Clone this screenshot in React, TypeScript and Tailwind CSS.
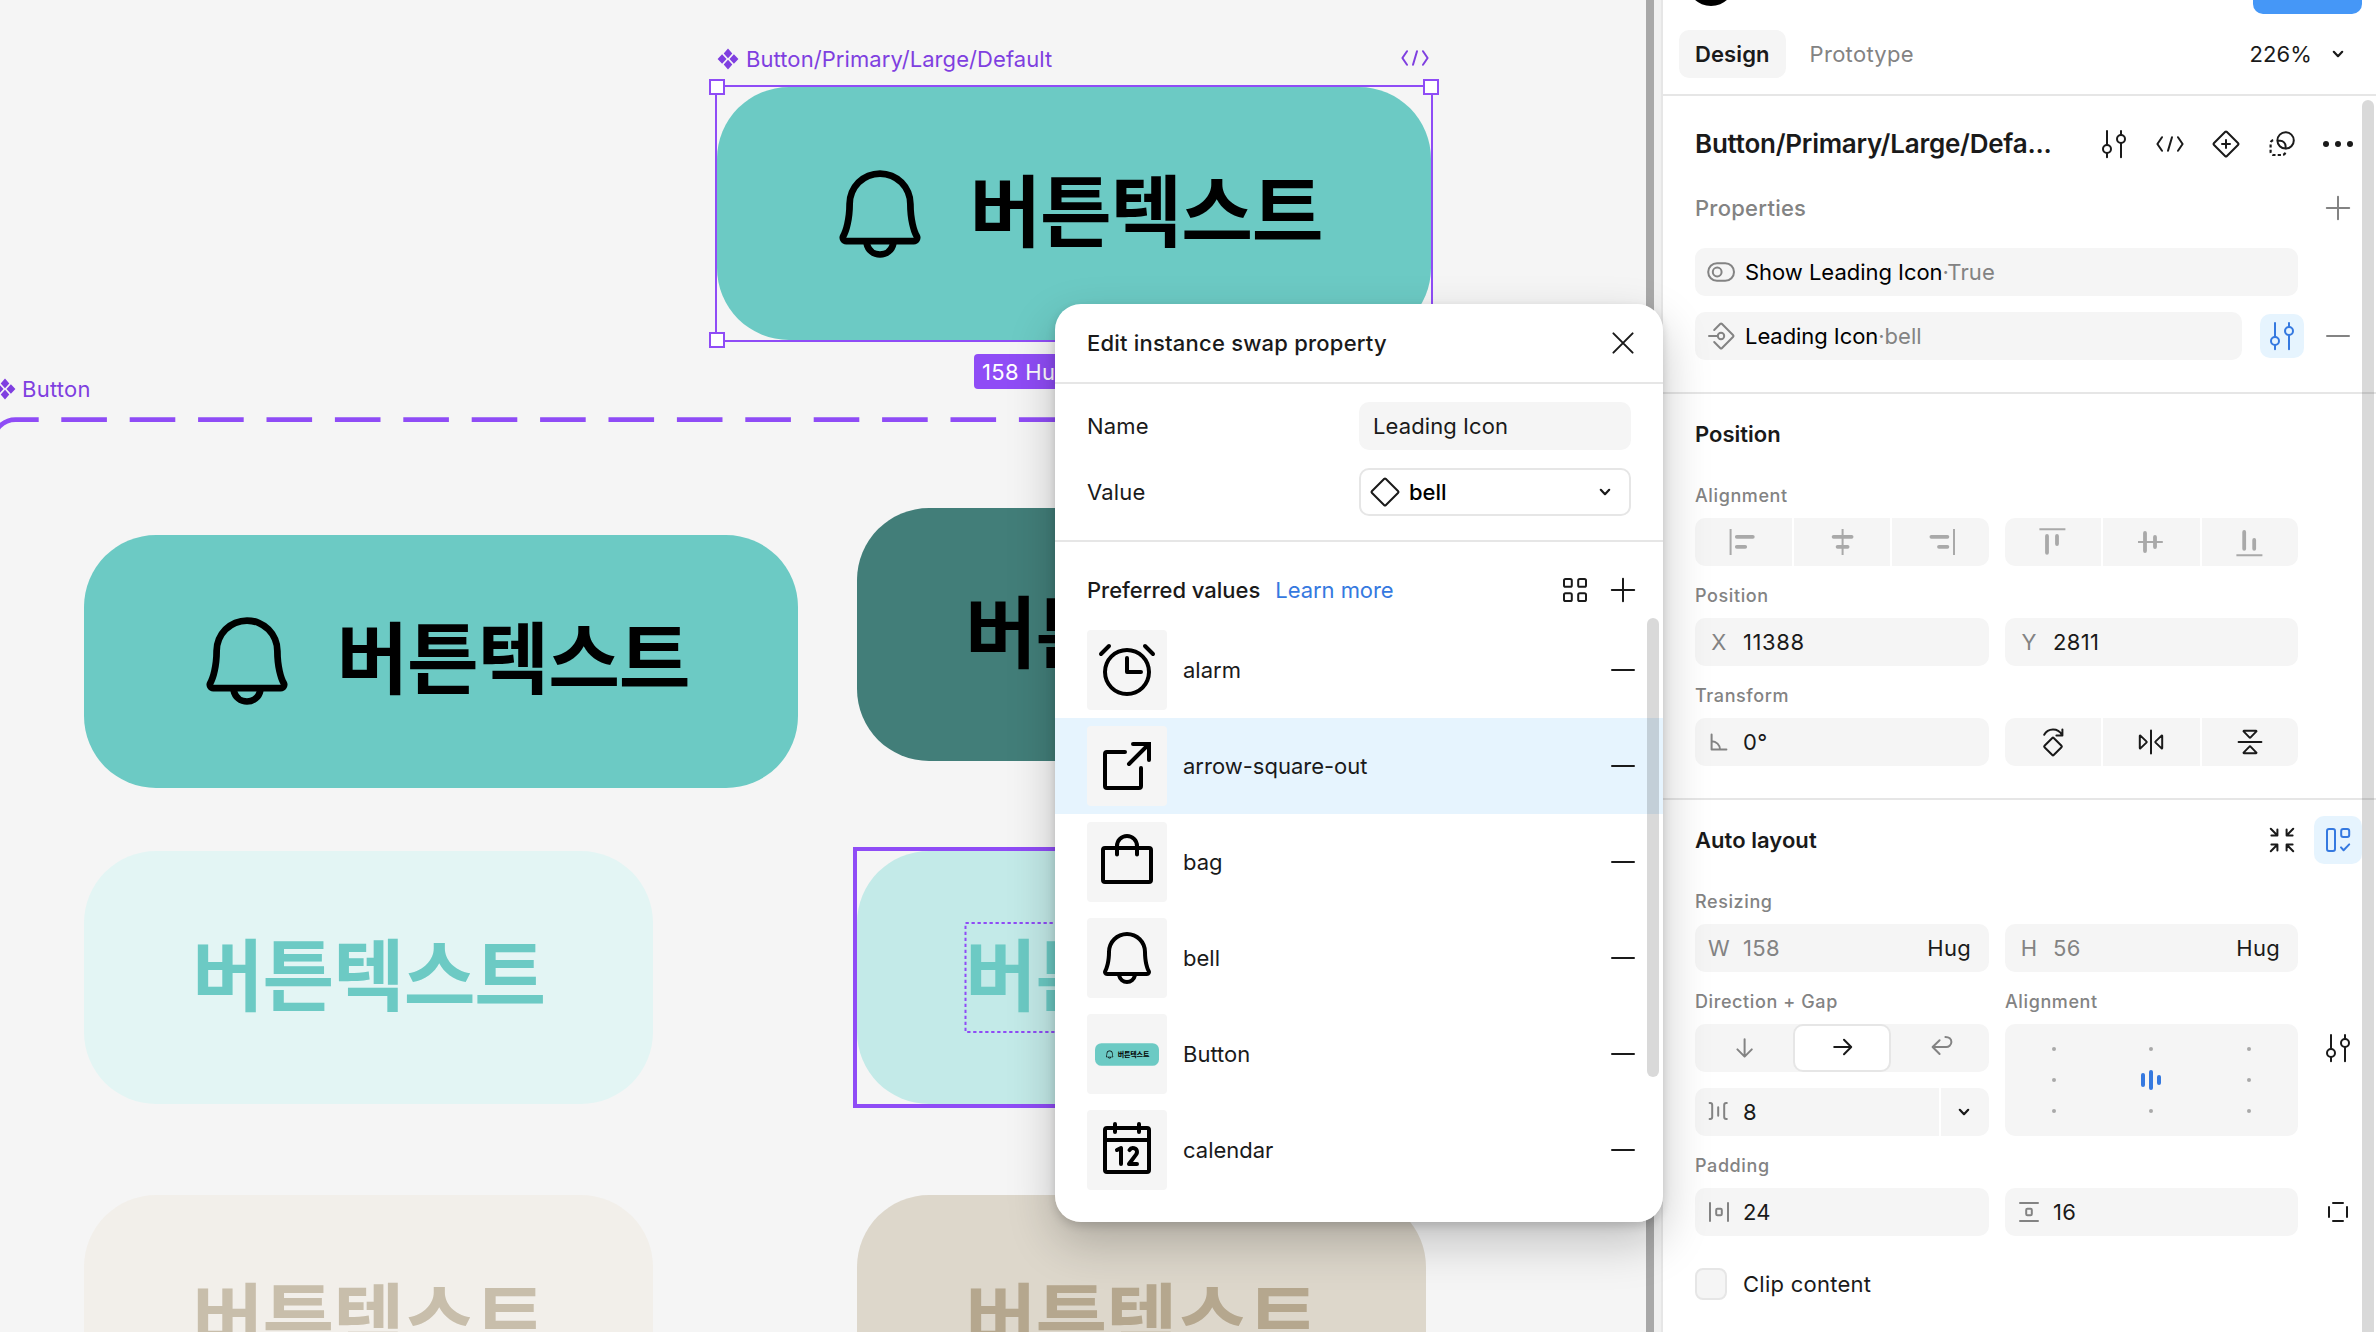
import type { ReactNode } from "react";
import { PiAlarm, PiBell, PiCalendar } from "react-icons/pi";

/* ---------- icons (24-unit grid drawn at 48px) ---------- */

function Ico({ children, className = "text-[#1a1a1a]" }: { children: ReactNode; className?: string }) {
  return (
    <svg
      viewBox="0 0 24 24"
      className={`size-12 shrink-0 ${className}`}
      fill="none"
      stroke="currentColor"
      strokeWidth="1"
      strokeLinecap="round"
      strokeLinejoin="round"
    >
      {children}
    </svg>
  );
}

const GRAY = "text-[#838383]";
const LIGHT = "text-[#a9a9a9]";
const BLUE = "text-[#3579e0]";

const Sliders = ({ className }: { className?: string }) => (
  <Ico className={className}>
    <path d="M8.5 5.5v7M8.5 16.6v2M15.5 5.5v2M15.5 11.6v7" />
    <circle cx="8.5" cy="14.5" r="2" />
    <circle cx="15.5" cy="9.5" r="2" />
  </Ico>
);
const Code = ({ className }: { className?: string }) => (
  <Ico className={className}>
    <path d="M8 8.6 5.7 12 8 15.4M16 8.6l2.3 3.4-2.3 3.4M13 8.6l-2 6.8" />
  </Ico>
);
const Plus = ({ className }: { className?: string }) => (
  <Ico className={className}>
    <path d="M12 6.4v11.2M6.4 12h11.2" />
  </Ico>
);
const Minus = ({ className }: { className?: string }) => (
  <Ico className={className}>
    <path d="M6.5 12h11" />
  </Ico>
);
const Chevron = () => (
  <Ico>
    <path strokeWidth="1.1" d="M9.9 10.9 12 13.1l2.1-2.2" />
  </Ico>
);
const ComponentMark = ({ className = "" }: { className?: string }) => (
  <svg viewBox="0 0 24 24" className={`size-6 shrink-0 ${className}`} fill="currentColor">
    <path d="M12 1.4 16.3 6.4 12 11.2 7.7 6.4zM12 12.8l4.3 4.8L12 22.6l-4.3-5zM6.1 7.2l4.4 4.8-4.4 4.8L1.6 12zM17.9 7.2l4.5 4.8-4.5 4.8-4.4-4.8z" />
  </svg>
);

/* ---------- canvas ---------- */

function DesignButton({ icon = false, className }: { icon?: boolean; className: string }) {
  return (
    <div className={`flex h-[253px] items-center justify-center gap-9 rounded-[72px] ${className}`}>
      {icon && <PiBell className="size-[108px] shrink-0" />}
      <span className="w-[353px] shrink-0 pr-[2px] pb-[14px] text-center font-['Noto_Sans_CJK_KR',sans-serif] text-[78px] leading-[110px] font-bold tracking-[-1.2px] whitespace-nowrap">
        버튼텍스트
      </span>
    </div>
  );
}

const Handle = ({ className }: { className: string }) => (
  <span className={`absolute size-4 border-2 border-[#8f4cf6] bg-white ${className}`} />
);

function Canvas() {
  return (
    <main className="relative w-[1646px] shrink-0 overflow-hidden bg-[#f5f5f5]">
      <DesignButton icon className="absolute top-[534.5px] left-[84px] w-[714px] bg-[#6ccac4] text-black" />
      <DesignButton className="absolute top-[851px] left-[84px] w-[569px] bg-[#e3f5f4] text-[#6ccac4]" />
      <DesignButton className="absolute top-[1195px] left-[84px] w-[569px] bg-[#f2efea] text-[#c8beab]" />
      <DesignButton className="absolute top-[508px] left-[857px] w-[569px] bg-[#427e79] text-black" />
      <DesignButton className="absolute top-[851px] left-[857px] w-[569px] bg-[#c3eae8] text-[#6ccac4]" />
      <DesignButton className="absolute top-[1195px] left-[857px] w-[569px] bg-[#ddd7cb] text-[#b5a78e]" />

      <svg className="absolute inset-0 h-full w-full" fill="none" stroke="#8f4cf6">
        <path d="M-6.5 442a22 22 0 0 1 22-22.4H38.7" strokeWidth="4.6" />
        <path d="M61.3 419.6H1400" strokeWidth="4.6" strokeDasharray="45.6 22.8" />
        <rect x="855" y="849" width="573" height="257" strokeWidth="4" />
        <rect x="965.5" y="923" width="353" height="109" strokeWidth="2" strokeDasharray="3.3 2.7" />
      </svg>

      <div className="absolute top-[376px] left-[-7px] flex h-[26px] items-center gap-[5px] tracking-[0.25px] text-[#7f3fe0]">
        <ComponentMark />
        Button
      </div>

      <div className="absolute top-[46px] left-[716px] flex h-[26px] w-[716px] items-center gap-[6px] tracking-[0.08px] text-[#7f3fe0]">
        <ComponentMark />
        Button/Primary/Large/Default
        <Code className="absolute top-[-12px] right-[-7px] text-[#7f3fe0]" />
      </div>
      <DesignButton icon className="absolute top-[87px] left-[717px] w-[714px] bg-[#6ccac4] text-black" />
      <div className="absolute top-[85px] left-[715px] h-[257px] w-[718px] border-2 border-[#8f4cf6]">
        <Handle className="-top-2 -left-2" />
        <Handle className="-top-2 -right-2" />
        <Handle className="-bottom-2 -left-2" />
        <Handle className="-right-2 -bottom-2" />
      </div>
      <div className="absolute top-[354px] left-[974px] flex h-[35px] items-center rounded-[4px] bg-[#8f4cf6] px-2 tracking-[0.3px] text-white">
        158 Hug × 56 Hug
      </div>
    </main>
  );
}

/* ---------- instance swap dialog ---------- */

const ArrowSquareOut = () => (
  <svg viewBox="0 0 24 24" className="size-16" fill="none" stroke="currentColor" strokeWidth="1.5" strokeLinecap="round">
    <path d="M14.25 3.75h6v6M20.25 3.75l-7.5 7.5" />
    <path strokeLinejoin="round" d="M17.25 12.75v6.75a.75.75 0 0 1-.75.75h-12a.75.75 0 0 1-.75-.75v-12a.75.75 0 0 1 .75-.75h6.75" />
  </svg>
);
const Bag = () => (
  <svg viewBox="0 0 24 24" className="size-16" fill="none" stroke="currentColor" strokeWidth="1.5" strokeLinecap="round">
    <rect x="3" y="6.75" width="18" height="12.75" rx="0.75" />
    <path d="M8.25 9.2V6a3.75 3.75 0 0 1 7.5 0v3.2" />
  </svg>
);
const MiniButton = () => (
  <span className="flex h-[23px] w-16 items-center justify-center">
    <span className="shrink-0 scale-[0.0896]">
      <DesignButton icon className="w-[714px] bg-[#6ccac4] text-black" />
    </span>
  </span>
);

const VALUES: { name: string; thumb: ReactNode; active?: boolean }[] = [
  { name: "alarm", thumb: <PiAlarm className="size-16" /> },
  { name: "arrow-square-out", thumb: <ArrowSquareOut />, active: true },
  { name: "bag", thumb: <Bag /> },
  { name: "bell", thumb: <PiBell className="size-16" /> },
  { name: "Button", thumb: <MiniButton /> },
  { name: "calendar", thumb: <PiCalendar className="size-16" /> },
];

function SwapDialog() {
  return (
    <section className="absolute top-[304px] left-[1055px] flex w-[608px] flex-col overflow-hidden rounded-[26px] bg-white pb-6">
      <header className="flex h-20 items-center justify-between border-b-2 border-[#e6e6e6] pr-4 pl-8">
        <h2 className="font-medium tracking-[0.21px]">Edit instance swap property</h2>
        <Ico>
          <path d="m7.2 7.2 9.6 9.6M16.8 7.2l-9.6 9.6" />
        </Ico>
      </header>

      <div className="flex flex-col gap-[18px] border-b-2 border-[#e6e6e6] px-8 pt-[18px] pb-6">
        <div className="flex items-center justify-between">
          <span className="tracking-[0.2px]">Name</span>
          <div className="flex h-12 w-[272px] items-center rounded-[10px] bg-[#f5f5f5] px-[14px]">Leading Icon</div>
        </div>
        <div className="flex items-center justify-between">
          <span className="tracking-[0.2px]">Value</span>
          <div className="flex h-12 w-[272px] items-center rounded-[10px] border-2 border-[#e6e6e6] font-medium text-black">
            <Ico>
              <path d="M11.65 5.4a.5.5 0 0 1 .7 0l6.25 6.25a.5.5 0 0 1 0 .7l-6.25 6.25a.5.5 0 0 1-.7 0L5.4 12.35a.5.5 0 0 1 0-.7z" />
            </Ico>
            <span className="flex-1 tracking-normal">bell</span>
            <Chevron />
          </div>
        </div>
      </div>

      <div className="flex h-20 items-center pt-4 pr-4 pl-8">
        <h3 className="font-medium tracking-[-0.02px]">Preferred values</h3>
        <a className="ml-[15px] flex-1 tracking-[-0.05px] text-[#3579e0]">Learn more</a>
        <Ico>
          <rect x="6.5" y="6.5" width="3.9" height="3.9" rx="0.8" />
          <rect x="13.6" y="6.5" width="3.9" height="3.9" rx="0.8" />
          <rect x="6.5" y="13.6" width="3.9" height="3.9" rx="0.8" />
          <rect x="13.6" y="13.6" width="3.9" height="3.9" rx="0.8" />
        </Ico>
        <Plus />
      </div>

      <ul className="flex flex-col">
        {VALUES.map((v) => (
          <li key={v.name} className={`flex h-24 items-center gap-4 pr-4 pl-8 ${v.active ? "bg-[#e6f4fe]" : ""}`}>
            <span className="flex size-20 shrink-0 items-center justify-center overflow-hidden rounded-[4px] bg-[#f5f5f5] text-black">
              {v.thumb}
            </span>
            <span className="flex-1 tracking-normal">{v.name}</span>
            <Minus />
          </li>
        ))}
      </ul>
      <span className="absolute top-[314px] right-1 h-[459px] w-3 rounded-full bg-black/15" />
    </section>
  );
}

/* ---------- right panel ---------- */

const Field = ({ label, children, className = "w-[294px]" }: { label: ReactNode; children: ReactNode; className?: string }) => (
  <div className={`flex h-12 shrink-0 items-center rounded-[10px] bg-[#f5f5f5] tracking-[0.3px] ${className}`}>
    <span className={`flex w-12 shrink-0 justify-center ${GRAY}`}>{label}</span>
    {children}
  </div>
);

const Label = ({ children, className = "" }: { children: ReactNode; className?: string }) => (
  <div className={`flex h-[52px] items-center pt-2 text-[18px] font-medium tracking-[0.6px] ${GRAY} ${className}`}>
    {children}
  </div>
);

const Segments = ({ children, className = "w-[294px]" }: { children: ReactNode; className?: string }) => (
  <div className={`grid h-12 shrink-0 grid-cols-3 gap-[2px] overflow-hidden rounded-[10px] *:flex *:items-center *:justify-center *:bg-[#f5f5f5] ${className}`}>
    {children}
  </div>
);

const Bars = ({ line, bars }: { line: string; bars: string }) => (
  <div>
    <Ico className={LIGHT}>
      <path d={line} strokeLinecap="butt" />
      <path d={bars} strokeWidth="1.9" />
    </Ico>
  </div>
);

const Dot = () => <span className="size-1 rounded-full bg-[#a9a9a9]" />;

function Panel() {
  return (
    <aside className="relative flex w-[715px] shrink-0 flex-col border-l-2 border-[#e6e6e6] bg-white">
      <div className="flex h-[14px] items-end justify-between overflow-hidden pr-[14px] pl-6">
        <span className="mb-2 size-12 shrink-0 rounded-full bg-black" />
        <span className="h-12 w-[109px] shrink-0 rounded-[10px] bg-[#4597f7]" />
      </div>

      <div className="flex h-[82px] items-center border-b-2 border-[#e6e6e6] pr-[14px] pl-4">
        <span className="flex h-12 items-center rounded-[10px] bg-[#f5f5f5] px-4 font-semibold">Design</span>
        <span className={`ml-6 flex-1 tracking-[0.3px] ${GRAY}`}>Prototype</span>
        <span className="mr-[2px]">226%</span>
        <Chevron />
      </div>

      <section className="flex flex-col gap-4 border-b-2 border-[#e6e6e6] pt-6 pr-[14px] pb-8 pl-8">
        <div className="flex items-center gap-2">
          <h1 className="flex-1 text-[26px] font-semibold tracking-[-0.24px] whitespace-nowrap">Button/Primary/Large/Defa...</h1>
          <Sliders />
          <Code />
          <Ico>
            <path d="M11.65 5.9a.5.5 0 0 1 .7 0l5.75 5.75a.5.5 0 0 1 0 .7l-5.75 5.75a.5.5 0 0 1-.7 0L5.9 12.35a.5.5 0 0 1 0-.7zM12 10v4M10 12h4" />
          </Ico>
          <Ico>
            <circle cx="13.8" cy="10.2" r="4.1" />
            <path d="M9.9 10.4h1.2a2.7 2.7 0 0 1 2.7 2.7v1" />
            <path
              strokeWidth="1.1"
              strokeLinecap="butt"
              strokeDasharray="1.6 1.1"
              d="M7.6 10.1a1.6 1.6 0 0 0-1.3 1.6v4.2a1.6 1.6 0 0 0 1.6 1.6h4.2a1.6 1.6 0 0 0 1.6-1.4"
            />
          </Ico>
          <Ico>
            <g fill="currentColor" stroke="none">
              <circle cx="6" cy="12" r="1.5" />
              <circle cx="12" cy="12" r="1.5" />
              <circle cx="18" cy="12" r="1.5" />
            </g>
          </Ico>
        </div>
        <div className="flex items-center justify-between">
          <h2 className={`font-medium tracking-[0.25px] ${GRAY}`}>Properties</h2>
          <Plus className={GRAY} />
        </div>
        <div className="flex h-12 w-[603px] items-center rounded-[10px] bg-[#f5f5f5] pl-[2px]">
          <Ico className={GRAY}>
            <rect x="5.6" y="7.6" width="12.9" height="8.8" rx="4.4" />
            <circle cx="10.1" cy="12" r="2.2" />
          </Ico>
          <span className="tracking-[-0.03px] text-black">Show Leading Icon</span>
          <span className={`${GRAY} tracking-[0.15px]`}>·True</span>
        </div>
        <div className="flex items-center gap-2">
          <div className="mr-2 flex h-12 w-[547px] items-center rounded-[10px] bg-[#f5f5f5] pl-[2px]">
            <Ico className={GRAY}>
              <path d="M8.6 9 11.7 5.9a.5.5 0 0 1 .7 0l5.7 5.75a.5.5 0 0 1 0 .7l-5.7 5.75a.5.5 0 0 1-.7 0L8.6 15M6 12h4.2" />
              <circle cx="12" cy="12" r="1.6" />
            </Ico>
            <span className="tracking-[-0.06px] text-black">Leading Icon</span>
            <span className={`${GRAY} tracking-normal`}>·bell</span>
          </div>
          <span className="mx-[2px] flex size-11 items-center justify-center rounded-[10px] bg-[#e6f4fe]">
            <Sliders className={BLUE} />
          </span>
          <Minus className={GRAY} />
        </div>
      </section>

      <section className="flex flex-col border-b-2 border-[#e6e6e6] pt-4 pb-8 pl-8">
        <h2 className="mb-2 flex h-12 items-center font-semibold tracking-normal">Position</h2>
        <Label>Alignment</Label>
        <div className="flex gap-4">
          <Segments>
            <Bars line="M5.8 5.5v13" bars="M8.9 9.4h8M8.9 14.4h4.2" />
            <Bars line="M12.3 5.5v13" bars="M7.8 9.4h9M9.8 14.4h5" />
            <Bars line="M18.5 5.5v13" bars="M7.2 9.4h8M11 14.4h4.2" />
          </Segments>
          <Segments className="w-[293px]">
            <Bars line="M5.2 5.6h13" bars="M9 9v8.4M14 9v4" />
            <Bars line="M5.5 12h12.4" bars="M9 7.5v9M14 9.5v5" />
            <Bars line="M5.2 18.6h13" bars="M9.1 7v8.4M14.1 11v4.4" />
          </Segments>
        </div>
        <Label>Position</Label>
        <div className="flex gap-4">
          <Field label="X">
            <span className="tracking-[0.6px]">11388</span>
          </Field>
          <Field label="Y" className="w-[293px]">2811</Field>
        </div>
        <Label>Transform</Label>
        <div className="flex gap-4">
          <Field
            label={
              <Ico className={GRAY}>
                <path d="M8.3 8.3v7.5h7.4M8.3 11.6a4.2 4.2 0 0 1 4.2 4.2" />
              </Ico>
            }
          >
            0°
          </Field>
          <Segments className="w-[293px]">
            <div>
              <Ico>
                <path d="M11.65 10a.5.5 0 0 1 .7 0l3.9 3.9a.5.5 0 0 1 0 .7l-3.9 3.9a.5.5 0 0 1-.7 0l-3.9-3.9a.5.5 0 0 1 0-.7zM7.6 8.4a5 5 0 0 1 8.8-.1M16.7 5.7v3h-3" />
              </Ico>
            </div>
            <div>
              <Ico>
                <path d="M12 6.3v11.4M6.4 9v6a.2.2 0 0 0 .3.2l3-2.9a.4.4 0 0 0 0-.6l-3-2.9a.2.2 0 0 0-.3.2zM17.6 9v6a.2.2 0 0 1-.3.2l-3-2.9a.4.4 0 0 1 0-.6l3-2.9a.2.2 0 0 1 .3.2z" />
              </Ico>
            </div>
            <div>
              <Ico>
                <path d="M6.3 12h11.4M9 6.4h6a.2.2 0 0 1 .2.3l-2.9 3a.4.4 0 0 1-.6 0l-2.9-3a.2.2 0 0 1 .2-.3zM9 17.6h6a.2.2 0 0 0 .2-.3l-2.9-3a.4.4 0 0 0-.6 0l-2.9 3a.2.2 0 0 0 .2.3z" />
              </Ico>
            </div>
          </Segments>
        </div>
      </section>

      <section className="flex flex-col pt-4 pr-[14px] pl-8">
        <div className="mb-2 flex items-center gap-2">
          <h2 className="flex-1 font-semibold tracking-[0.05px]">Auto layout</h2>
          <Ico>
            <path d="M6.4 6.4l3.2 3.2M9.7 6.7v3h-3M17.6 6.4l-3.2 3.2M14.3 6.7v3h3M6.4 17.6l3.2-3.2M9.7 17.3v-3h-3M17.6 17.6l-3.2-3.2M14.3 17.3v-3h3" />
          </Ico>
          <span className={`rounded-[10px] bg-[#e6f4fe] ${BLUE}`}>
            <Ico className={BLUE}>
              <rect x="6.5" y="6.5" width="4" height="11" rx="1" />
              <rect x="13.6" y="6.5" width="4" height="4" rx="1" />
              <path d="m13.5 15.7 1.3 1.4 2.8-2.9" />
            </Ico>
          </span>
        </div>
        <Label>Resizing</Label>
        <div className="flex gap-4">
          <Field label="W">
            <span className={`flex-1 ${GRAY}`}>158</span>
            <span className="mr-[18px]">Hug</span>
          </Field>
          <Field label="H" className="w-[293px]">
            <span className={`flex-1 ${GRAY}`}>56</span>
            <span className="mr-[18px]">Hug</span>
          </Field>
        </div>
        <div className="flex">
          <Label className="w-[310px]">Direction + Gap</Label>
          <Label>Alignment</Label>
        </div>
        <div className="flex gap-4">
          <div className="flex w-[294px] flex-col gap-4">
            <div className="grid h-12 grid-cols-3 grid-rows-[48px] rounded-[10px] bg-[#f5f5f5] *:flex *:items-center *:justify-center">
              <div>
                <Ico className={GRAY}>
                  <path d="M12.3 7.6v8.6M8.7 12.7l3.6 3.6 3.6-3.6" />
                </Ico>
              </div>
              <div className="h-12 rounded-[10px] border-2 border-[#e6e6e6] bg-white">
                <Ico>
                  <path d="M8.1 11.5h8.3M13 7.9l3.6 3.6-3.6 3.6" />
                </Ico>
              </div>
              <div>
                <Ico className={GRAY}>
                  <path d="M11.8 8.1 8.3 11.5l3.5 3.5M8.5 11.5h6.4a2.6 2.6 0 0 0 2.8-2.5c0-1.5-1.2-2.5-3-2.5" />
                </Ico>
              </div>
            </div>
            <div className="flex h-12 gap-[2px] overflow-hidden rounded-[10px]">
              <div className="flex flex-1 items-center bg-[#f5f5f5]">
                <Ico className={GRAY}>
                  <path d="M7.3 7.5h.3a1 1 0 0 1 1 1v6a1 1 0 0 1-1 1h-.3M15.9 7.5h-.3a1 1 0 0 0-1 1v6a1 1 0 0 0 1 1h.3M11.6 9.6v4.3" />
                </Ico>
                8
              </div>
              <div className="flex w-12 items-center justify-center bg-[#f5f5f5]">
                <span className="mr-[2px]">
                  <Chevron />
                </span>
              </div>
            </div>
          </div>
          <div className="grid w-[293px] grid-cols-3 grid-rows-3 place-items-center rounded-[10px] bg-[#f5f5f5] py-[9px] *:shrink-0">
            <Dot />
            <Dot />
            <Dot />
            <Dot />
            <div className="flex items-center gap-1 *:w-1 *:rounded-full *:bg-[#3579e0]">
              <i className="h-[14px]" />
              <i className="h-5" />
              <i className="h-[10px]" />
            </div>
            <Dot />
            <Dot />
            <Dot />
            <Dot />
          </div>
          <Sliders />
        </div>
        <Label>Padding</Label>
        <div className="flex gap-4">
          <Field
            label={
              <Ico className={GRAY}>
                <path d="M7.5 7.5v9M16.5 7.5v9" />
                <rect x="10.6" y="10.4" width="2.8" height="3.2" rx="0.6" />
              </Ico>
            }
          >
            24
          </Field>
          <Field
            className="w-[293px]"
            label={
              <Ico className={GRAY}>
                <path d="M7.5 7.5h9M7.5 16.5h9" />
                <rect x="10.6" y="10.4" width="2.8" height="3.2" rx="0.6" />
              </Ico>
            }
          >
            16
          </Field>
          <Ico>
            <path d="M9.5 7.5h5M9.5 16.5h5M7.5 9.5v5M16.5 9.5v5" />
          </Ico>
        </div>
        <div className="mt-8 flex h-8 items-center gap-4">
          <span className="size-8 rounded-[8px] border-2 border-[#e6e6e6] bg-[#f5f5f5]" />
          <span className="tracking-[0.25px]">Clip content</span>
        </div>
      </section>

      <span className="absolute top-[100px] right-[2px] h-[1260px] w-3 rounded-full bg-black/15" />
    </aside>
  );
}

export default function App() {
  return (
    <div className="relative flex h-[1332px] w-[2376px] overflow-hidden bg-[#f0f0f0] font-['Inter','Noto_Sans_CJK_KR',sans-serif] text-[22px] leading-8 tracking-[0.1px] text-[#1a1a1a]">
      <Canvas />
      <div className="mr-[7px] w-2 shrink-0 bg-[#a8a8a8]" />
      <Panel />
      <div className="absolute top-[304px] left-[1055px] h-[918px] w-[608px] rounded-[26px] shadow-[0_20px_48px_rgba(0,0,0,0.22),0_4px_10px_rgba(0,0,0,0.15)]" />
      <SwapDialog />
    </div>
  );
}
